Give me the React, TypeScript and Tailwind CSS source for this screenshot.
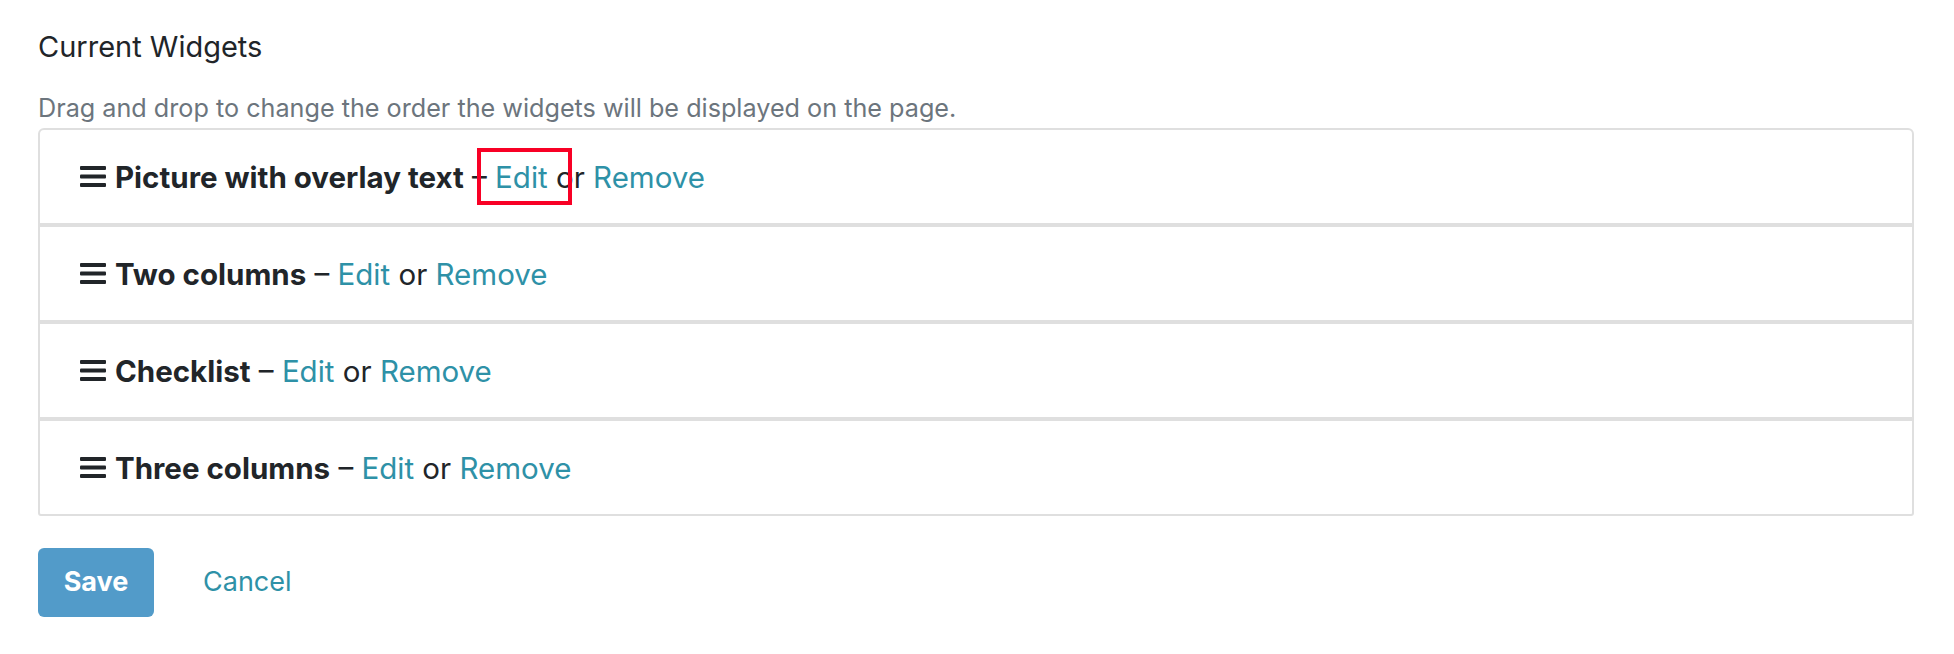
const widgets = [
  { id: 1, name: 'Picture with overlay text', highlight: true },
  { id: 2, name: 'Two columns' },
  { id: 3, name: 'Checklist' },
  { id: 4, name: 'Three columns' },
];

function Bars() {
  return (
    <svg width="26" height="21" viewBox="0 0 26 21" className="shrink-0 mr-[9px]">
      <rect x="0" y="0" width="26" height="4" rx="1" fill="#212529" />
      <rect x="0" y="8.5" width="26" height="4" rx="1" fill="#212529" />
      <rect x="0" y="17" width="26" height="4" rx="1" fill="#212529" />
    </svg>
  );
}

export default function App() {
  return (
    <div className="min-h-screen bg-white pl-[38px] pr-[40px] font-['Inter',sans-serif] text-[#212529]">
      <h5 className="pt-[29px] text-[29px] leading-[35px] font-normal">Current Widgets</h5>
      <p className="mt-[29px] mb-[5px] text-[25.2px] leading-[30px] text-[#6c757d]">
        Drag and drop to change the order the widgets will be displayed on the page.
      </p>

      <div className="flex flex-col">
        {widgets.map((w, i) => (
          <div
            key={w.id}
            className={`flex h-[97px] items-center border-2 border-[#dfdfdf] pl-[40px] ${
              i === 0 ? 'rounded-t-[6px]' : ''
            } ${i === widgets.length - 1 ? 'rounded-b-[3px]' : ''}`}
          >
            <Bars />
            <span className="text-[29.5px] leading-[36px] whitespace-pre">
              <strong className="font-bold">{w.name}</strong>
              {' – '}
              <span className="relative">
                <a href="#" className="text-[#2e91a7]">Edit</a>
                {w.highlight && (
                  <span className="pointer-events-none absolute -left-[18px] -right-[24px] -top-[11px] -bottom-[10px] border-4 border-[#f80025]" />
                )}
              </span>
              {' or '}
              <a href="#" className="text-[#2e91a7]">Remove</a>
            </span>
          </div>
        ))}
      </div>

      <div className="mt-[32px] flex items-center gap-[49px]">
        <button className="h-[69px] w-[116px] rounded-[6px] bg-[#529bc9] text-[27px] font-bold text-white">
          Save
        </button>
        <a href="#" className="text-[27px] text-[#2e91a7]">Cancel</a>
      </div>
    </div>
  );
}
